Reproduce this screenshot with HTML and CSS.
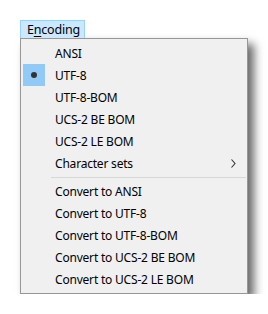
FILE: index.html
```html
<!DOCTYPE html>
<html>
<head>
<meta charset="utf-8">
<link rel="stylesheet" href="styles.css">
</head>
<body>
<div class="wrap">
  <div class="tab"><span>E<u>n</u>coding</span></div>
  <div class="menu">
    <div class="item"><span class="chk"></span><span class="label">ANSI</span></div>
    <div class="item"><span class="chk on"><span class="dot"></span></span><span class="label">UTF-8</span></div>
    <div class="item"><span class="chk"></span><span class="label">UTF-8-BOM</span></div>
    <div class="item"><span class="chk"></span><span class="label">UCS-2 BE BOM</span></div>
    <div class="item"><span class="chk"></span><span class="label">UCS-2 LE BOM</span></div>
    <div class="item"><span class="chk"></span><span class="label">Character sets</span>
      <svg class="arrow" width="5" height="9" viewBox="0 0 5 9"><path d="M0.5 0.5 L4 4.5 L0.5 8.5" fill="none" stroke="#333" stroke-width="1.1"/></svg>
    </div>
    <div class="sep"></div>
    <div class="item"><span class="chk"></span><span class="label">Convert to ANSI</span></div>
    <div class="item"><span class="chk"></span><span class="label">Convert to UTF-8</span></div>
    <div class="item"><span class="chk"></span><span class="label">Convert to UTF-8-BOM</span></div>
    <div class="item"><span class="chk"></span><span class="label">Convert to UCS-2 BE BOM</span></div>
    <div class="item"><span class="chk"></span><span class="label">Convert to UCS-2 LE BOM</span></div>
  </div>
</div>
</body>
</html>
```
FILE: styles.css
```css
html, body {
  margin: 0;
  padding: 0;
  background: #ffffff;
}
body {
  font-family: "Noto Sans", "Open Sans", sans-serif;
  font-size: 12px;
  letter-spacing: -0.2px;
  color: #000;
}
.wrap {
  padding: 20px 0 0 20px;
  width: 228px;
}
.tab {
  display: inline-flex;
  align-items: center;
  box-sizing: border-box;
  width: 65px;
  height: 18px;
  padding-left: 6px;
  background: #cce8ff;
  border: 1px solid #99d1ff;
  border-bottom: none;
  font-size: 12.5px;
}
.tab span {
  line-height: 16px;
}
.tab u {
  text-underline-offset: 2px;
}
.menu {
  box-sizing: border-box;
  width: 228px;
  border: 1px solid #979797;
  background: #f0f0f0;
  padding: 3px 0;
  box-shadow: 6px 6px 9px rgba(0, 0, 0, 0.6);
}
.item {
  display: flex;
  align-items: center;
  height: 22px;
  padding-left: 2px;
}
.chk {
  width: 22px;
  height: 22px;
  display: flex;
  align-items: center;
  justify-content: center;
  flex: none;
}
.chk.on {
  background: #91c9f7;
}
.dot {
  width: 6px;
  height: 6px;
  border-radius: 50%;
  background: #333333;
}
.label {
  margin-left: 10px;
  white-space: nowrap;
}
.arrow {
  margin-left: auto;
  margin-right: 11px;
}
.sep {
  height: 1px;
  background: #d7d7d7;
  margin: 3px 1px 2px 30px;
}
```
